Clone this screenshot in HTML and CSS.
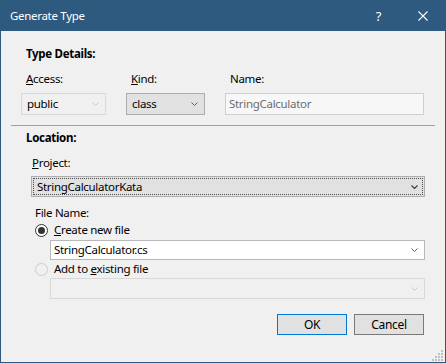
FILE: index.html
```html
<!DOCTYPE html>
<html lang="en">
<head>
    <meta charset="UTF-8">
    <title>Generate Type</title>
    <link rel="stylesheet" href="styles.css">
</head>
<body>

<div class="window">
    <div class="titlebar">
        <span class="title">Generate Type</span>
        <span class="help">?</span>
        <svg class="close" width="10" height="10" viewBox="0 0 10 10">
            <path d="M0.5 0.5 L9.5 9.5 M9.5 0.5 L0.5 9.5" stroke="#fff" stroke-width="1.1"/>
        </svg>
    </div>

    <div class="content">
        <div class="type-details">
            <div class="heading">Type Details:</div>
            <div class="fields">
                <div class="field">
                    <label><u>A</u>ccess:</label>
                    <div class="combo disabled access">
                        <span>public</span>
                        <svg class="arrow" width="7" height="4" viewBox="0 0 7 4"><path d="M0.5 0.5 L3.5 3.5 L6.5 0.5" fill="none" stroke="#c8c8c8"/></svg>
                    </div>
                </div>
                <div class="field">
                    <label><u>K</u>ind:</label>
                    <div class="combo button-combo kind">
                        <span>class</span>
                        <svg class="arrow" width="7" height="4" viewBox="0 0 7 4"><path d="M0.5 0.5 L3.5 3.5 L6.5 0.5" fill="none" stroke="#606060"/></svg>
                    </div>
                </div>
                <div class="field">
                    <label>Name:</label>
                    <div class="textbox readonly">StringCalculator</div>
                </div>
            </div>
        </div>

        <div class="separator"></div>

        <div class="location">
            <div class="heading">Location:</div>
            <div class="location-body">
                <label class="project-label"><u>P</u>roject:</label>
                <div class="combo button-combo project">
                    <span>StringCalculatorKata</span>
                    <svg class="arrow" width="7" height="4" viewBox="0 0 7 4"><path d="M0.5 0.5 L3.5 3.5 L6.5 0.5" fill="none" stroke="#404040" stroke-width="1.2"/></svg>
                </div>

                <div class="file-name">
                    <label>File Name:</label>
                    <div class="radio-row">
                        <span class="radio checked"></span>
                        <span><u>C</u>reate new file</span>
                    </div>
                    <div class="combo edit-combo">
                        <span>StringCalculator.cs</span>
                        <svg class="arrow" width="7" height="4" viewBox="0 0 7 4"><path d="M0.5 0.5 L3.5 3.5 L6.5 0.5" fill="none" stroke="#606060"/></svg>
                    </div>
                    <div class="radio-row">
                        <span class="radio off"></span>
                        <span>Add to <u>e</u>xisting file</span>
                    </div>
                    <div class="combo disabled edit-combo">
                        <span></span>
                        <svg class="arrow" width="7" height="4" viewBox="0 0 7 4"><path d="M0.5 0.5 L3.5 3.5 L6.5 0.5" fill="none" stroke="#c8c8c8"/></svg>
                    </div>
                </div>
            </div>
        </div>

        <div class="buttons">
            <button class="btn default">OK</button>
            <button class="btn">Cancel</button>
        </div>
    </div>

    <svg class="grip" width="12" height="12" viewBox="0 0 12 12" fill="#c0c0c0">
        <rect x="9" y="1" width="2" height="2"/>
        <rect x="6" y="4" width="2" height="2"/><rect x="9" y="4" width="2" height="2"/>
        <rect x="3" y="7" width="2" height="2"/><rect x="6" y="7" width="2" height="2"/><rect x="9" y="7" width="2" height="2"/>
        <rect x="0" y="10" width="2" height="2"/><rect x="3" y="10" width="2" height="2"/><rect x="6" y="10" width="2" height="2"/><rect x="9" y="10" width="2" height="2"/>
    </svg>
</div>

</body>
</html>
```

FILE: styles.css
```css
body {
    margin: 0;
    font-family: "Noto Sans", "Open Sans", sans-serif;
    font-size: 11.5px;
    letter-spacing: -0.3px;
    line-height: 16px;
    color: #000;
}

.window {
    position: relative;
    width: 446px;
    height: 363px;
    box-sizing: border-box;
    background-color: #f0f0f0;
    border: 1px solid #2d5a7e;
    border-top: none;
    display: flex;
    flex-direction: column;
}

.titlebar {
    height: 31px;
    margin: 0 -1px;
    background-color: #2d5a7e;
    color: #fff;
    display: flex;
    align-items: center;
    padding-left: 10px;
}

.title {
    flex: 1;
}

.help {
    margin-right: 37px;
    font-size: 13px;
}

.close {
    margin-right: 18px;
}

.content {
    padding: 0 10px;
    display: flex;
    flex-direction: column;
}

.heading {
    font-weight: 700;
}

.type-details {
    padding: 15px 11px 0 10px;
}

.type-details .heading {
    margin-left: 5px;
}

.fields {
    display: grid;
    grid-template-columns: 85px 79px 1fr;
    column-gap: 20px;
    margin-top: 9px;
}

.field {
    display: flex;
    flex-direction: column;
    gap: 6px;
}

.field label {
    margin-left: 5px;
}

.combo,
.textbox {
    box-sizing: border-box;
    height: 22px;
    border: 1px solid #adadad;
    display: flex;
    align-items: center;
    padding: 0 6px 0 5px;
}

.combo span {
    flex: 1;
}

.button-combo {
    background-color: #e1e1e1;
}

.combo.disabled {
    background-color: #f0f0f0;
    border-color: #d9d9d9;
}

.textbox.readonly {
    background-color: #f7f7f7;
    border-color: #d0d0d0;
    color: #6d6d6d;
    padding-left: 3px;
}

.separator {
    height: 1px;
    background-color: #a0a0a0;
    margin-top: 10px;
}

.location {
    padding: 4px 10px 0 15px;
}

.location-body {
    padding-left: 5px;
    margin-top: 9px;
    display: flex;
    flex-direction: column;
}

.project-label {
    margin-left: 1px;
}

.combo.project {
    height: 21px;
    margin-top: 5px;
    outline: 1px dotted #505050;
    outline-offset: -3px;
}

.file-name {
    padding-left: 4px;
    margin-top: 8px;
    display: flex;
    flex-direction: column;
}

.radio-row {
    display: flex;
    align-items: center;
    gap: 6px;
    margin-top: 1px;
}

.radio {
    box-sizing: border-box;
    width: 13px;
    height: 13px;
    border-radius: 50%;
    border: 1px solid #333;
    background-color: #fff;
    position: relative;
}

.radio.checked::after {
    content: "";
    position: absolute;
    left: 2px;
    top: 2px;
    width: 7px;
    height: 7px;
    border-radius: 50%;
    background-color: #333;
}

.radio.off {
    border-color: #cccccc;
    background-color: #f0f0f0;
}

.edit-combo {
    height: 20px;
    margin: 2px 0 0 15px;
    background-color: #fff;
    border-color: #b8b8b8;
    padding-left: 3px;
}

.radio-row + .combo.disabled {
    height: 21px;
    margin-top: 1px;
}

.file-name .radio-row:nth-of-type(2) {
    margin-top: 4px;
}

.buttons {
    display: flex;
    justify-content: flex-end;
    gap: 7px;
    padding-right: 11px;
    margin-top: 15px;
}

.btn {
    box-sizing: border-box;
    width: 70px;
    height: 21px;
    padding: 0;
    font-family: inherit;
    font-size: 12px;
    letter-spacing: inherit;
    background-color: #e1e1e1;
    border: 1px solid #7a7a7a;
    color: #000;
}

.btn.default {
    border-color: #0078d7;
}

.grip {
    position: absolute;
    right: 1px;
    bottom: 1px;
}
```
